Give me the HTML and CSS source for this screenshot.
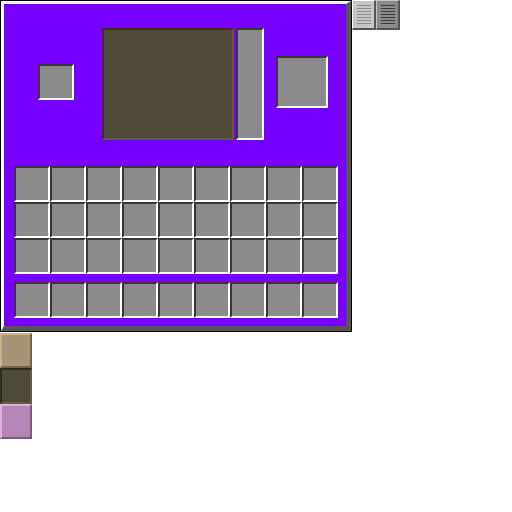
FILE: index.html
```html
<!DOCTYPE html>
<html>
<head>
<meta charset="utf-8">
<link rel="stylesheet" href="styles.css">
</head>
<body>
<div class="page">
  <div class="col">
    <div class="panel">
      <div class="bevel">
        <div class="inner">
          <div class="top">
            <div class="slot small"></div>
            <div class="screen"></div>
            <div class="slot tall"></div>
            <div class="slot big"></div>
          </div>
          <div class="grid">
            <div class="slot"></div><div class="slot"></div><div class="slot"></div><div class="slot"></div><div class="slot"></div><div class="slot"></div><div class="slot"></div><div class="slot"></div><div class="slot"></div>
            <div class="slot"></div><div class="slot"></div><div class="slot"></div><div class="slot"></div><div class="slot"></div><div class="slot"></div><div class="slot"></div><div class="slot"></div><div class="slot"></div>
            <div class="slot"></div><div class="slot"></div><div class="slot"></div><div class="slot"></div><div class="slot"></div><div class="slot"></div><div class="slot"></div><div class="slot"></div><div class="slot"></div>
          </div>
          <div class="grid hotbar">
            <div class="slot"></div><div class="slot"></div><div class="slot"></div><div class="slot"></div><div class="slot"></div><div class="slot"></div><div class="slot"></div><div class="slot"></div><div class="slot"></div>
          </div>
        </div>
      </div>
    </div>
    <div class="swatch beige"></div>
    <div class="swatch dark"></div>
    <div class="swatch pink"></div>
  </div>
  <div class="tabs">
    <div class="tab light"><div class="lines"></div></div>
    <div class="tab mid"><div class="lines"></div></div>
  </div>
</div>
</body>
</html>
```
FILE: styles.css
```css
html, body { margin: 0; padding: 0; background: #ffffff; }
.page { display: flex; align-items: flex-start; }
.col { display: flex; flex-direction: column; align-items: flex-start; }
.panel { width: 350px; height: 330px; border: 1px solid #000000; }
.bevel {
  width: 342px; height: 322px;
  border-top: 3px solid #ffffff; border-left: 3px solid #ffffff;
  border-right: 5px solid #555555; border-bottom: 5px solid #555555;
  background: #7700ff;
}
.inner { padding: 24px 0 0 10px; }
.top { display: flex; align-items: flex-start; height: 112px; }
.slot {
  box-sizing: border-box; width: 36px; height: 36px;
  background: #8b8b8b;
  border-top: 2px solid #373737; border-left: 2px solid #373737;
  border-right: 2px solid #ffffff; border-bottom: 2px solid #ffffff;
}
.small { margin: 36px 0 0 24px; }
.screen {
  box-sizing: border-box; width: 132px; height: 112px; margin-left: 28px;
  background: #4f4837;
  border-top: 2px solid #38331f; border-left: 2px solid #38331f;
  border-right: 2px solid #645b41; border-bottom: 2px solid #645b41;
}
.tall { width: 28px; height: 112px; margin-left: 2px; }
.big { width: 52px; height: 52px; margin: 28px 0 0 12px; }
.grid { display: grid; grid-template-columns: repeat(9, 36px); grid-auto-rows: 36px; margin-top: 26px; }
.hotbar { margin-top: 8px; }
.swatch { box-sizing: border-box; width: 32px; height: 36px; }
.beige { height: 35px; margin-top: 1px; background: #a59475; border-top: 2px solid #c8b48c; border-left: 2px solid #c8b48c; border-right: 2px solid #6e6350; border-bottom: 2px solid #6e6350; }
.dark { background: #4e4838; border-top: 2px solid #2e2b20; border-left: 2px solid #2e2b20; border-right: 2px solid #615a46; border-bottom: 2px solid #615a46; }
.pink { height: 35px; background: #b386b3; border-top: 2px solid #e4ade4; border-left: 2px solid #e4ade4; border-right: 2px solid #7b5a7b; border-bottom: 2px solid #7b5a7b; }
.tabs { display: flex; }
.tab {
  box-sizing: border-box; width: 24px; height: 30px; padding: 4px 3px 0 4px;
  border-top: 1px solid #ffffff; border-left: 1px solid #ffffff;
  border-right: 2px solid #555555; border-bottom: 2px solid #555555;
}
.light { background: #c6c6c6; }
.mid { background: #8b8b8b; border-top-color: #c6c6c6; border-left-color: #c6c6c6; }
.lines { height: 21px; }
.light .lines { background: repeating-linear-gradient(to bottom, #8b8b8b 0 1px, transparent 1px 3px); }
.mid .lines { background: repeating-linear-gradient(to bottom, #3c3c3c 0 1px, transparent 1px 3px); }
```
